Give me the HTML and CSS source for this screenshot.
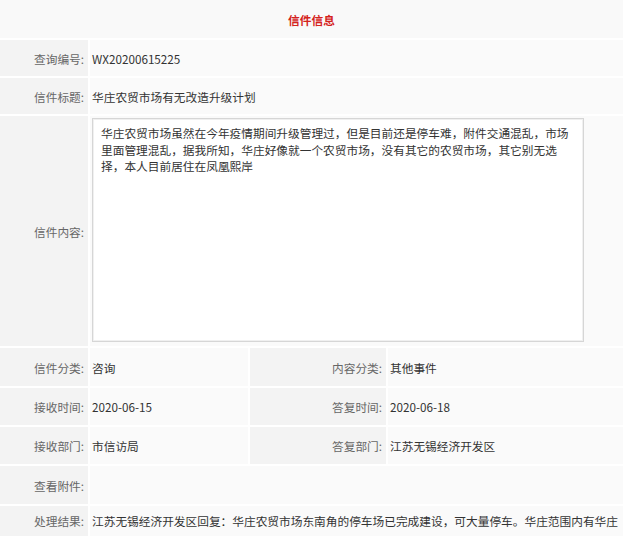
FILE: index.html
```html
<!DOCTYPE html>
<html lang="zh-CN">

<head>
    <meta charset="UTF-8">
    <meta name="viewport" content="width=device-width, initial-scale=1.0">
    <title>信件信息</title>
    <link rel="stylesheet" href="styles.css">
</head>

<body>
    <div class="letter">
        <div class="title">信件信息</div>

        <div class="label">查询编号:</div>
        <div class="value wide">WX20200615225</div>

        <div class="label">信件标题:</div>
        <div class="value wide">华庄农贸市场有无改造升级计划</div>

        <div class="label">信件内容:</div>
        <div class="value wide content-cell">
            <div class="content-box">华庄农贸市场虽然在今年疫情期间升级管理过，但是目前还是停车难，附件交通混乱，市场里面管理混乱，据我所知，华庄好像就一个农贸市场，没有其它的农贸市场，其它别无选择，本人目前居住在凤凰熙岸</div>
        </div>

        <div class="label">信件分类:</div>
        <div class="value">咨询</div>
        <div class="label">内容分类:</div>
        <div class="value">其他事件</div>

        <div class="label">接收时间:</div>
        <div class="value">2020-06-15</div>
        <div class="label">答复时间:</div>
        <div class="value">2020-06-18</div>

        <div class="label">接收部门:</div>
        <div class="value">市信访局</div>
        <div class="label">答复部门:</div>
        <div class="value">江苏无锡经济开发区</div>

        <div class="label">查看附件:</div>
        <div class="value wide"></div>

        <div class="label result-label">处理结果:</div>
        <div class="value wide result">江苏无锡经济开发区回复：华庄农贸市场东南角的停车场已完成建设，可大量停车。华庄范围内有华庄农贸市场、华庄菜场等多个农贸市场可供选择。</div>
    </div>
</body>

</html>
```

FILE: styles.css
```css
body {
    margin: 0;
    background: #fff;
    font-family: "Microsoft YaHei", "Noto Sans CJK SC", "Noto Sans", sans-serif;
    font-size: 11.7px;
}

.letter {
    display: grid;
    grid-template-columns: 88px 158px 136px 235px;
    grid-template-rows: 38px 36px 36px 230px 38px 37px 37px 38px auto;
    gap: 2px;
    width: 623px;
}

.title {
    grid-column: 1 / -1;
    display: flex;
    align-items: center;
    justify-content: center;
    background: #f9f9f9;
    color: #d4231c;
    font-weight: bold;
}

.label {
    display: flex;
    align-items: center;
    justify-content: flex-end;
    padding-right: 4px;
    background: #f3f3f3;
    color: #666;
}

.value {
    display: flex;
    align-items: center;
    padding-left: 2px;
    background: #fafafa;
    color: #333;
}

.wide {
    grid-column: 2 / -1;
}

.content-cell {
    align-items: flex-start;
    padding-top: 2px;
}

.content-box {
    width: 474px;
    height: 206px;
    padding: 8px;
    background: #fff;
    border: 1px solid #d6d6d6;
    box-shadow: inset 0 0 0 1px #f0f0f0;
    font-family: "Liberation Serif", "Noto Sans CJK SC", serif;
    font-size: 11.7px;
    line-height: 16.5px;
    color: #333;
}

.result-label {
    align-items: flex-start;
    padding-top: 3px;
    line-height: 24px;
}

.result {
    align-items: flex-start;
    padding-top: 3px;
    padding-bottom: 8px;
    line-height: 24px;
}
```
